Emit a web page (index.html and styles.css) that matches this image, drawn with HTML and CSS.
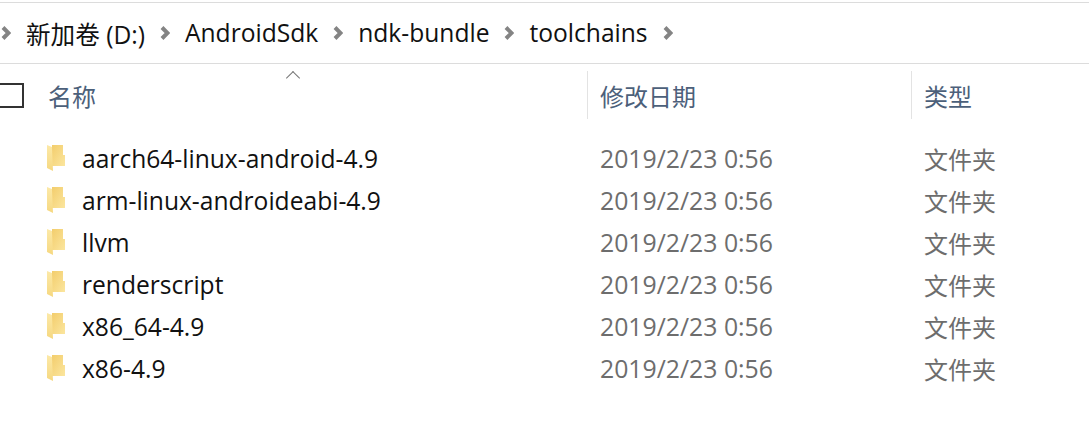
FILE: index.html
```html
<!DOCTYPE html>
<html lang="zh-CN">
<head>
  <meta charset="UTF-8">
  <title>toolchains</title>
  <link rel="stylesheet" href="styles.css">
</head>
<body>
  <svg class="defs" width="0" height="0">
    <defs>
      <linearGradient id="folder-body" x1="0" y1="0" x2="1" y2="1">
        <stop offset="0" stop-color="#f3cd6c"/>
        <stop offset="1" stop-color="#fbe69f"/>
      </linearGradient>
      <linearGradient id="folder-flap" x1="0" y1="0" x2="0" y2="1">
        <stop offset="0" stop-color="#fce9a8"/>
        <stop offset="1" stop-color="#f6d880"/>
      </linearGradient>
    </defs>
    <symbol id="chevron" viewBox="0 0 10 14">
      <path d="M2 1.5 L7.5 7 L2 12.5" fill="none" stroke="#848484" stroke-width="4"/>
    </symbol>
    <symbol id="folder" viewBox="0 0 18 26">
      <path d="M5 0 H16 V10 H18 V21 H5 Z" fill="url(#folder-body)"/>
      <path d="M0 0 L5 2 L6 26 L0 23 Z" fill="url(#folder-flap)"/>
    </symbol>
  </svg>

  <div class="address-bar">
    <svg class="chevron"><use href="#chevron"/></svg>
    <span class="crumb">新加卷 (D:)</span>
    <svg class="chevron"><use href="#chevron"/></svg>
    <span class="crumb">AndroidSdk</span>
    <svg class="chevron"><use href="#chevron"/></svg>
    <span class="crumb">ndk-bundle</span>
    <svg class="chevron"><use href="#chevron"/></svg>
    <span class="crumb">toolchains</span>
    <svg class="chevron"><use href="#chevron"/></svg>
  </div>

  <div class="list-header">
    <div class="check-col"><span class="checkbox"></span></div>
    <div class="col-name">名称<span class="sort-arrow"></span></div>
    <div class="col-date">修改日期</div>
    <div class="col-type">类型</div>
  </div>

  <div class="file-list">
    <div class="file-row">
      <svg class="folder"><use href="#folder"/></svg>
      <div class="file-name">aarch64-linux-android-4.9</div>
      <div class="file-date">2019/2/23 0:56</div>
      <div class="file-type">文件夹</div>
    </div>
    <div class="file-row">
      <svg class="folder"><use href="#folder"/></svg>
      <div class="file-name">arm-linux-androideabi-4.9</div>
      <div class="file-date">2019/2/23 0:56</div>
      <div class="file-type">文件夹</div>
    </div>
    <div class="file-row">
      <svg class="folder"><use href="#folder"/></svg>
      <div class="file-name">llvm</div>
      <div class="file-date">2019/2/23 0:56</div>
      <div class="file-type">文件夹</div>
    </div>
    <div class="file-row">
      <svg class="folder"><use href="#folder"/></svg>
      <div class="file-name">renderscript</div>
      <div class="file-date">2019/2/23 0:56</div>
      <div class="file-type">文件夹</div>
    </div>
    <div class="file-row">
      <svg class="folder"><use href="#folder"/></svg>
      <div class="file-name">x86_64-4.9</div>
      <div class="file-date">2019/2/23 0:56</div>
      <div class="file-type">文件夹</div>
    </div>
    <div class="file-row">
      <svg class="folder"><use href="#folder"/></svg>
      <div class="file-name">x86-4.9</div>
      <div class="file-date">2019/2/23 0:56</div>
      <div class="file-type">文件夹</div>
    </div>
  </div>
</body>
</html>
```
FILE: styles.css
```css
body {
  margin: 0;
  background: white;
  font-family: "Open Sans", "Noto Sans CJK SC", sans-serif;
  font-size: 24px;
  overflow: hidden;
}
.defs {
  display: block;
}
.address-bar {
  display: flex;
  align-items: center;
  height: 59px;
  margin-top: 2px;
  padding-left: 1px;
  padding-bottom: 1px;
  border-top: 1px solid #dcdcdc;
  border-bottom: 1px solid #dcdcdc;
  color: #111;
}
.chevron {
  width: 10px;
  height: 14px;
  flex: none;
  margin-right: 15px;
}
.crumb {
  margin-right: 15px;
  font-size: 24.6px;
}
.list-header {
  display: flex;
  height: 62px;
  color: #4c607a;
}
.check-col {
  width: 48px;
  display: flex;
  align-items: center;
}
.checkbox {
  display: block;
  width: 26px;
  height: 25px;
  margin-left: -2px;
  border: 2px solid #333;
  box-sizing: border-box;
}
.col-name,
.col-date,
.col-type {
  display: flex;
  align-items: center;
  position: relative;
}
.col-name {
  width: 539px;
}
.col-date {
  width: 324px;
  padding-left: 12px;
  box-sizing: border-box;
  border-left: 1px solid #e3e3e3;
  margin: 7px 0;
}
.col-type {
  padding-left: 12px;
  border-left: 1px solid #e3e3e3;
  margin: 7px 0;
}
.sort-arrow {
  position: absolute;
  left: 240px;
  top: 9px;
  width: 9px;
  height: 9px;
  border-top: 1px solid #777;
  border-left: 1px solid #777;
  transform: rotate(45deg);
}
.file-list {
  padding-top: 11px;
}
.file-row {
  display: flex;
  align-items: center;
  height: 42px;
}
.folder {
  width: 18px;
  height: 26px;
  flex: none;
  margin-left: 47px;
  margin-right: 17px;
}
.file-name {
  width: 518px;
  color: #111;
  font-size: 24.6px;
}
.file-date {
  width: 324px;
  color: #6d6d6d;
  font-size: 24.8px;
}
.file-type {
  color: #6d6d6d;
}
```
